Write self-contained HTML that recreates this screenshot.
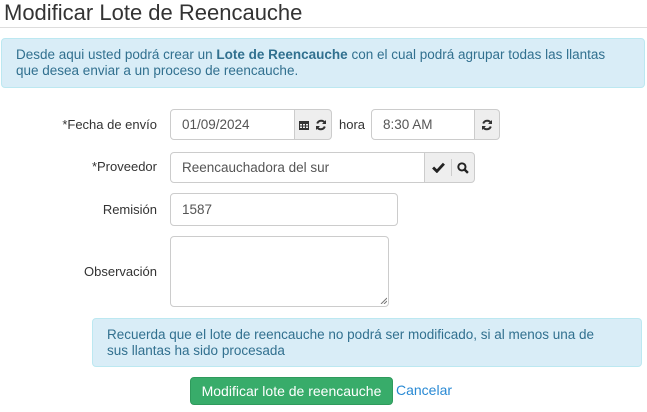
<!DOCTYPE html>
<html><head><meta charset="utf-8"><style>
*{box-sizing:border-box;margin:0;padding:0}
body{width:647px;height:412px;background:#fff;font-family:"Liberation Sans",sans-serif;color:#333;position:relative;overflow:hidden;font-size:13px}
.a{position:absolute}
.nw{white-space:nowrap}
.t{left:4px;top:0px;font-size:22px;color:#333}
.hr{left:0;top:27px;width:647px;height:1px;background:#ddd}
.al{background:#d9edf7;border:1px solid #bce8f1;border-radius:4px;color:#31708f;font-size:13.5px;line-height:16px;white-space:nowrap}
.in{border:1px solid #ccc;border-radius:4px;background:#fff;font-size:13.5px;color:#555;padding-left:11px;display:flex;align-items:center}
.ad{border:1px solid #ccc;background:#eee;display:flex;align-items:center;justify-content:center;gap:6px;border-radius:0 4px 4px 0}
.lb{width:157px;left:0;text-align:right;font-size:13px;color:#333}
svg{display:block}
</style></head><body>
<div class="a t nw">Modificar Lote de Reencauche</div>
<div class="a hr"></div>
<div class="a al" style="left:1px;top:38px;width:644px;height:50px;padding:8px 14px">Desde aqui usted podrá crear un <b>Lote de Reencauche</b> con el cual podrá agrupar todas las llantas<br>que desea enviar a un proceso de reencauche.</div>

<div class="a lb" style="top:117px">*Fecha de envío</div>
<div class="a in" style="left:170px;top:109px;width:125px;height:31px;border-radius:4px 0 0 4px">01/09/2024</div>
<div class="a ad" style="left:294px;top:109px;width:38px;height:31px">
<svg width="10" height="10" viewBox="0 0 10 10"><rect x="0" y="1" width="10" height="9" fill="#333"/><g fill="#eee"><rect x="1" y="4" width="2" height="1.5"/><rect x="4" y="4" width="2" height="1.5"/><rect x="7" y="4" width="2" height="1.5"/><rect x="1" y="6.5" width="2" height="1.5"/><rect x="4" y="6.5" width="2" height="1.5"/><rect x="7" y="6.5" width="2" height="1.5"/></g></svg>
<svg width="12" height="12" viewBox="0 0 12 12"><path d="M10 4A4.3 4.3 0 0 0 2.2 4.5M2 8A4.3 4.3 0 0 0 9.8 7.5" stroke="#333" stroke-width="2" fill="none"/><path d="M11 1v4H7zM1 11V7h4z" fill="#333"/></svg></div>
<div class="a" style="left:339px;top:117px">hora</div>
<div class="a in" style="left:371px;top:109px;width:104px;height:31px;border-radius:4px 0 0 4px">8:30 AM</div>
<div class="a ad" style="left:474px;top:109px;width:26px;height:31px">
<svg width="12" height="12" viewBox="0 0 12 12"><path d="M10 4A4.3 4.3 0 0 0 2.2 4.5M2 8A4.3 4.3 0 0 0 9.8 7.5" stroke="#333" stroke-width="2" fill="none"/><path d="M11 1v4H7zM1 11V7h4z" fill="#333"/></svg></div>

<div class="a lb" style="top:159px">*Proveedor</div>
<div class="a in" style="left:170px;top:152px;width:255px;height:31px;border-radius:4px 0 0 4px">Reencauchadora del sur</div>
<div class="a ad" style="left:424px;top:152px;width:51px;height:31px;gap:0">
<div style="width:28px;display:flex;justify-content:center;border-right:1px solid #ccc;height:17px;align-items:center"><svg width="13" height="11" viewBox="0 0 12 10"><path d="M1 5l3.5 3.5L11 1.5" stroke="#222" stroke-width="2.6" fill="none"/></svg></div>
<div style="width:22px;display:flex;justify-content:center"><svg width="12" height="12" viewBox="0 0 11 11"><circle cx="4.5" cy="4.5" r="3.3" stroke="#222" stroke-width="1.8" fill="none"/><path d="M7 7l3 3" stroke="#222" stroke-width="2.2"/></svg></div></div>

<div class="a lb" style="top:202px">Remisión</div>
<div class="a in" style="left:170px;top:193px;width:228px;height:33px">1587</div>

<div class="a lb" style="top:264px">Observación</div>
<div class="a in" style="left:170px;top:236px;width:219px;height:71px"></div>
<svg class="a" style="left:380px;top:297px" width="7" height="7" viewBox="0 0 7 7"><path d="M1 7L7 1M4 7L7 4" stroke="#777" stroke-width="1"/></svg>

<div class="a al" style="left:92px;top:318px;width:550px;height:49px;padding:8px 14px">Recuerda que el lote de reencauche no podrá ser modificado, si al menos una de<br>sus llantas ha sido procesada</div>

<div class="a" style="left:190px;top:377px;width:203px;height:28px;background:#38ac6a;border:1px solid #2f9a5c;border-radius:4px;color:#fff;font-size:14px;display:flex;align-items:center;justify-content:center">Modificar lote de reencauche</div>
<div class="a" style="left:396px;top:382px;color:#2a8ad4;font-size:14px">Cancelar</div>
</body></html>
